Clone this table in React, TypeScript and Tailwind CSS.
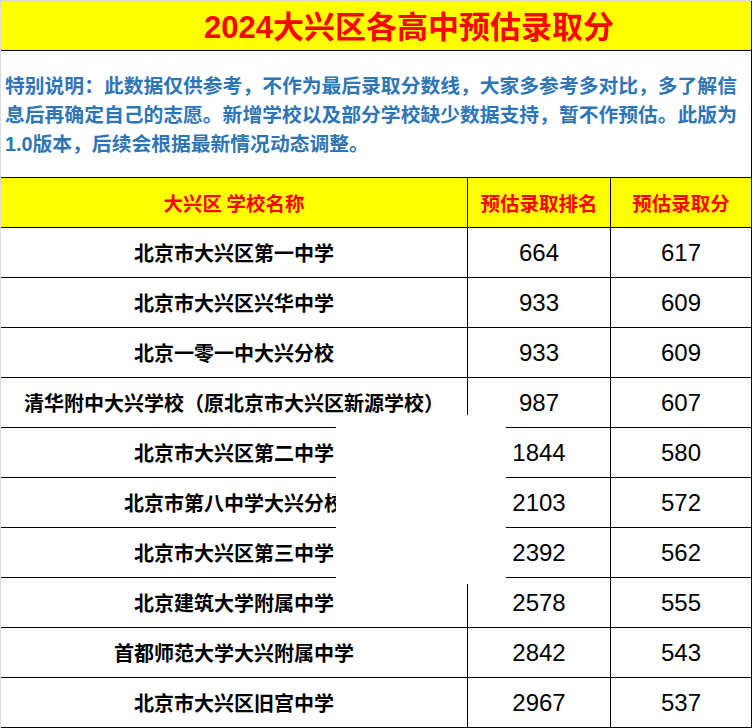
const cjk = "font-['Noto_Sans_CJK_SC','Noto_Sans',sans-serif]";
const num = "font-['Liberation_Sans','Noto_Sans_CJK_SC',sans-serif]";

const rows: [string, string, string][] = [
  ["北京市大兴区第一中学", "664", "617"],
  ["北京市大兴区兴华中学", "933", "609"],
  ["北京一零一中大兴分校", "933", "609"],
  ["清华附中大兴学校（原北京市大兴区新源学校）", "987", "607"],
  ["北京市大兴区第二中学", "1844", "580"],
  ["北京市第八中学大兴分校", "2103", "572"],
  ["北京市大兴区第三中学", "2392", "562"],
  ["北京建筑大学附属中学", "2578", "555"],
  ["首都师范大学大兴附属中学", "2842", "543"],
  ["北京市大兴区旧宫中学", "2967", "537"],
];

export default function App() {
  return (
    <div className="relative w-[752px] h-[728px] overflow-hidden bg-white border-t border-l border-[#dadada] box-border">
      <div className="border-r border-black">
        {/* title */}
        <div className="h-[50px] bg-[#ffff00] border-b border-black flex items-center pl-[203px]">
          <span className={`${cjk} text-[31px] font-bold text-[#ff0000] leading-none whitespace-nowrap`}>
            <span className={num}>2024</span>大兴区各高中预估录取分
          </span>
        </div>

        {/* note */}
        <div className="h-[127px] border-b border-black flex items-center pl-[4px]">
          <p className={`${cjk} text-[19.8px] font-bold text-[#2e75b6] leading-[29px] whitespace-nowrap`}>
            特别说明：此数据仅供参考，不作为最后录取分数线，大家多参考多对比，多了解信
            <br />
            息后再确定自己的志愿。新增学校以及部分学校缺少数据支持，暂不作预估。此版为
            <br />
            <span className={num}>1.0</span>版本，后续会根据最新情况动态调整。
          </p>
        </div>

        {/* header */}
        <div className={`${cjk} flex h-[50px] bg-[#ffff00] border-b border-black text-[19.5px] font-bold text-[#ff0000]`}>
          <div className="w-[467px] border-r border-black flex items-center justify-center">大兴区 学校名称</div>
          <div className="w-[143px] border-r border-black flex items-center justify-center">预估录取排名</div>
          <div className="flex-1 flex items-center justify-center">预估录取分</div>
        </div>

        {rows.map(([name, rank, score]) => (
          <div key={name} className="flex h-[50px] border-b border-black text-black">
            <div className={`${cjk} w-[467px] border-r border-black flex items-center justify-center text-[20px] font-bold whitespace-nowrap`}>
              {name}
            </div>
            <div className={`${num} w-[143px] border-r border-black flex items-center justify-center text-[24px]`}>
              {rank}
            </div>
            <div className={`${num} flex-1 flex items-center justify-center text-[24px]`}>{score}</div>
          </div>
        ))}
      </div>

      {/* pasted white block over the grid */}
      <div className="absolute left-[335px] top-[414px] w-[170px] h-[169px] bg-white" />
    </div>
  );
}
